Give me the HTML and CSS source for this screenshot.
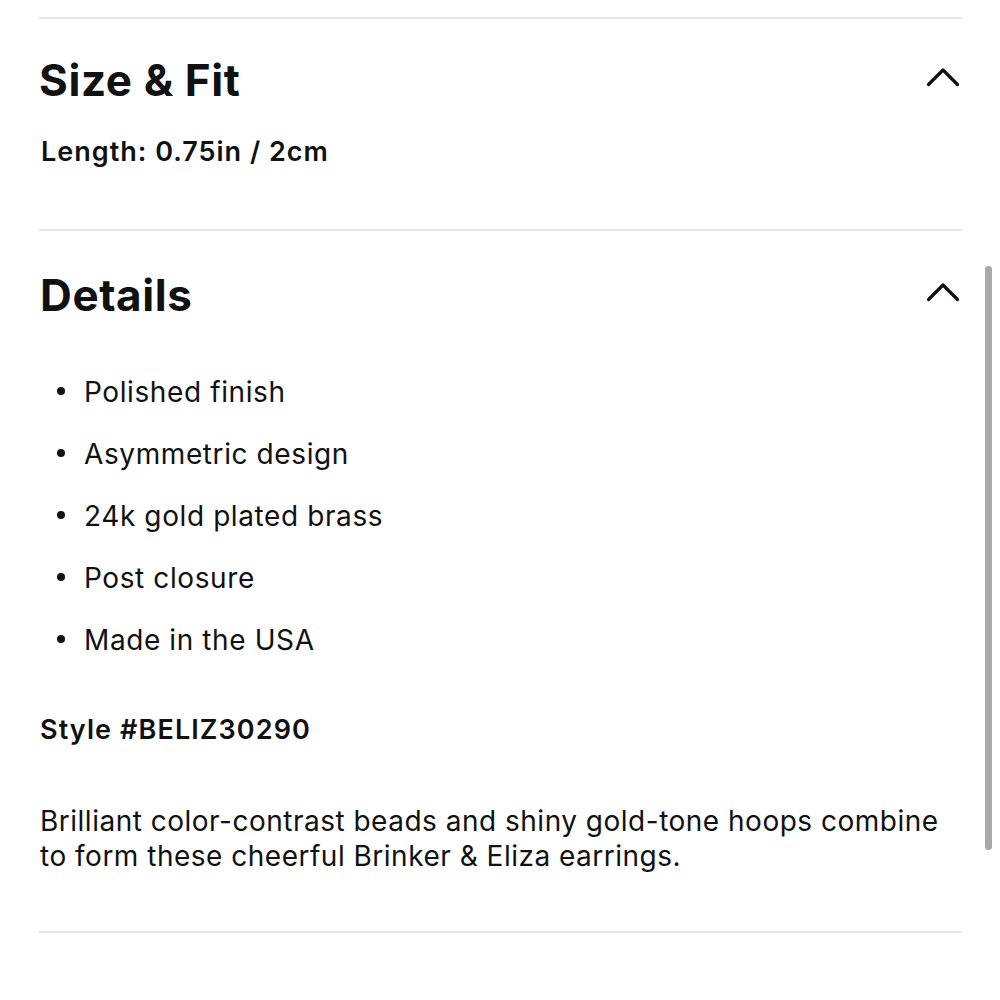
FILE: index.html
```html
<!DOCTYPE html>
<html lang="en">
<head>
<meta charset="utf-8">
<title>Product details</title>
<link rel="stylesheet" href="styles.css">
</head>
<body>
<main class="accordion">
  <section class="panel panel--size">
    <header class="panel-head">
      <h2 class="panel-title">Size &amp; Fit</h2>
      <svg class="chevron" width="34" height="20" viewBox="0 0 34 20" aria-hidden="true"><polyline points="2.5,17.5 17,3 31.5,17.5" fill="none" stroke="#111" stroke-width="3.2" stroke-linecap="round" stroke-linejoin="round"/></svg>
    </header>
    <p class="size-text">Length: 0.75in / 2cm</p>
  </section>
  <section class="panel panel--details">
    <header class="panel-head">
      <h2 class="panel-title">Details</h2>
      <svg class="chevron" width="34" height="20" viewBox="0 0 34 20" aria-hidden="true"><polyline points="2.5,17.5 17,3 31.5,17.5" fill="none" stroke="#111" stroke-width="3.2" stroke-linecap="round" stroke-linejoin="round"/></svg>
    </header>
    <ul class="features">
      <li>Polished finish</li>
      <li>Asymmetric design</li>
      <li>24k gold plated brass</li>
      <li>Post closure</li>
      <li>Made in the USA</li>
    </ul>
    <p class="style-no">Style #BELIZ30290</p>
    <p class="description">Brilliant color-contrast beads and shiny gold-tone hoops combine to form these cheerful Brinker &amp; Eliza earrings.</p>
  </section>
  <div class="panel-end"></div>
</main>
<div class="scrollbar"></div>
</body>
</html>
```
FILE: styles.css
```css
html, body {
  margin: 0;
  padding: 0;
  background: #fff;
}
body {
  font-family: Inter, "Liberation Sans", Arial, sans-serif;
  color: #111;
  height: 1000px;
  overflow: hidden;
}
.accordion {
  margin: 17px 38px 0 39px;
}
.panel {
  border-top: 2px solid #e6e6e6;
}
.panel-end {
  border-top: 2px solid #e6e6e6;
}
.panel--size {
  padding: 35px 0 59px;
}
.panel--details {
  padding: 38px 0 57px 1px;
}
.panel-head {
  display: flex;
  justify-content: space-between;
  align-items: center;
}
.panel-title {
  margin: 0;
  font-size: 44px;
  line-height: 52px;
  font-weight: 700;
  letter-spacing: 0.6px;
}
.chevron {
  display: block;
  margin: 0 2px 6px 0;
}
.size-text {
  margin: 28px 0 0 2px;
  font-size: 27px;
  line-height: 36px;
  font-weight: 600;
  letter-spacing: 1px;
}
.features {
  list-style: none;
  margin: 53px 0 0;
  padding: 0 0 0 44px;
  display: flex;
  flex-direction: column;
  gap: 26px;
}
.features li {
  position: relative;
  font-size: 28px;
  line-height: 36px;
  letter-spacing: 0.6px;
}
.features li::before {
  content: "";
  position: absolute;
  left: -27px;
  top: 13px;
  width: 8px;
  height: 8px;
  border-radius: 50%;
  background: #111;
}
.style-no {
  margin: 54px 0 0;
  font-size: 27px;
  line-height: 36px;
  font-weight: 600;
  letter-spacing: 1.1px;
}
.description {
  margin: 56px 0 0;
  font-size: 28px;
  line-height: 35px;
  letter-spacing: 0.5px;
}
.scrollbar {
  position: absolute;
  left: 985px;
  top: 266px;
  width: 7px;
  height: 584px;
  border-radius: 4px;
  background: #a9a9a9;
}
```
